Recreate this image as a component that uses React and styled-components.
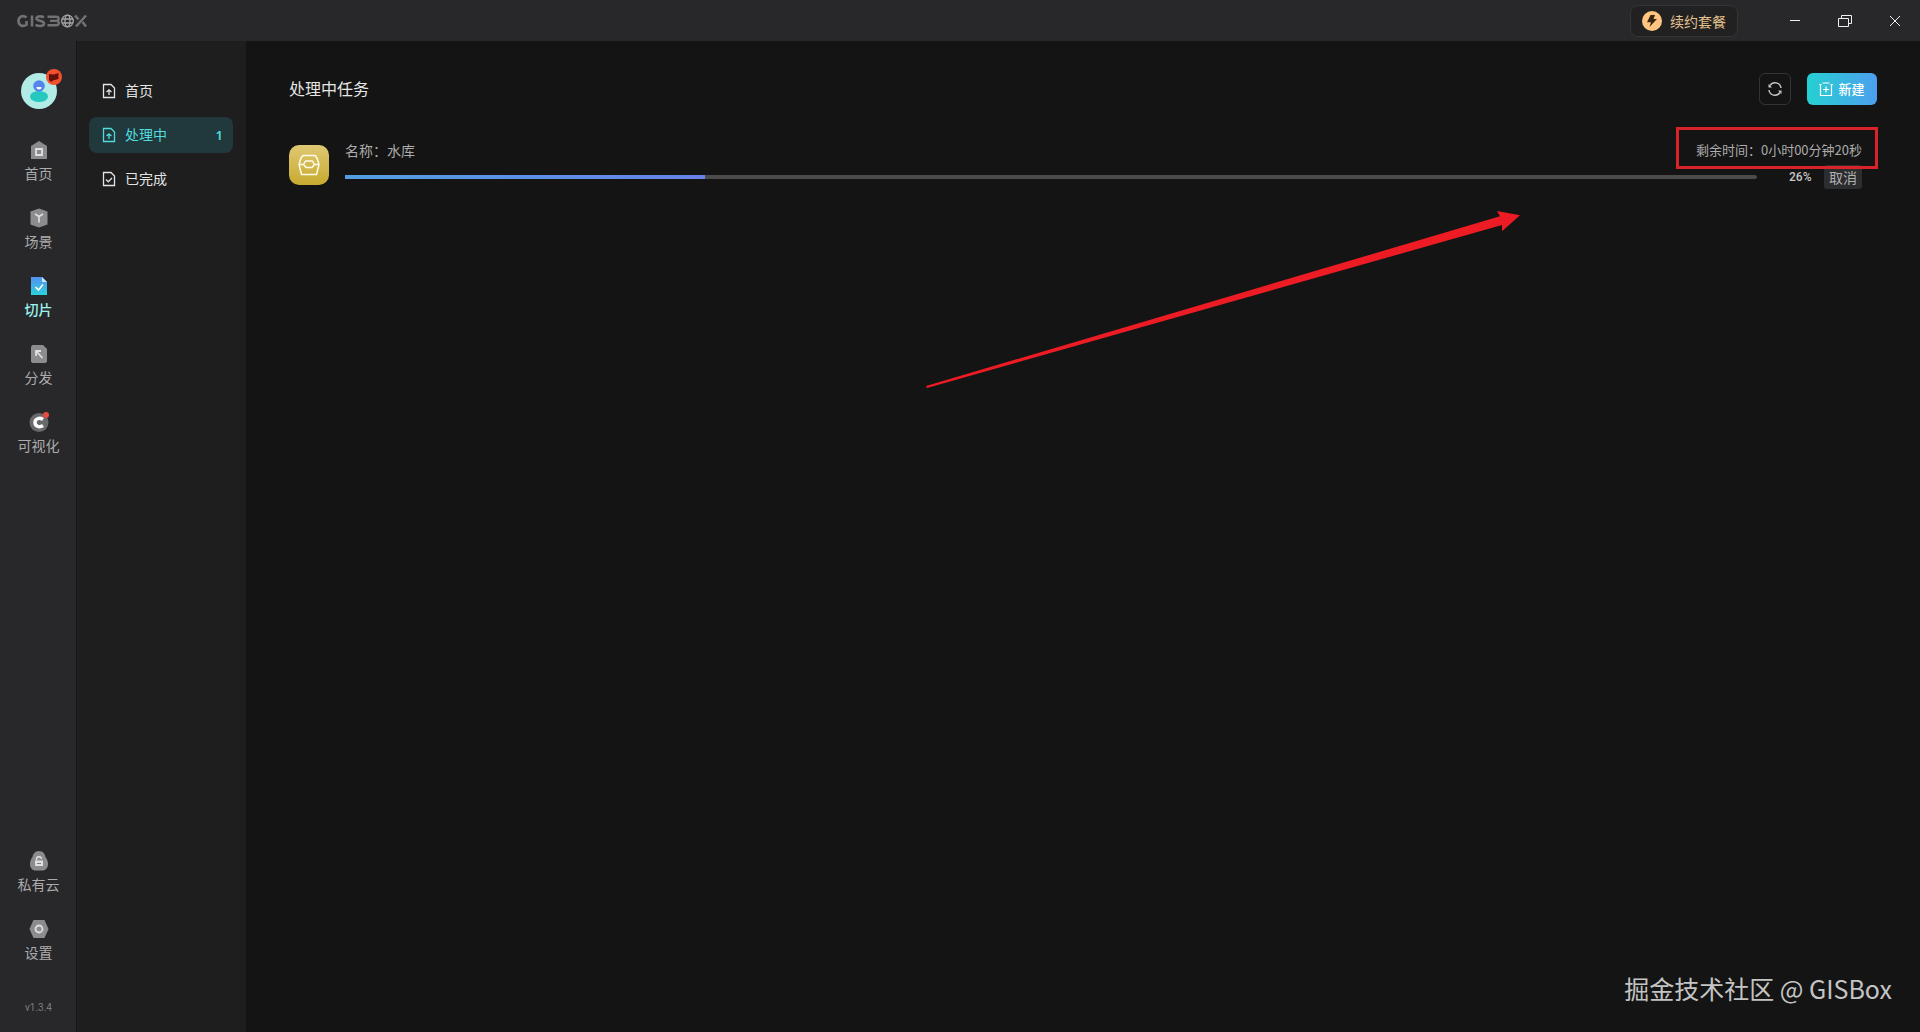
import React from "react";
import styled, { createGlobalStyle, css } from "styled-components";

const GlobalStyle = createGlobalStyle`
  * { box-sizing: border-box; }
  html, body, #root { height: 100%; }
  body {
    margin: 0;
    background: #141414;
    color: #e6e6e6;
    font-family: "Noto Sans CJK SC", "Noto Sans", sans-serif;
    font-size: 14px;
    line-height: 20px;
  }
  button { font: inherit; color: inherit; border: 0; background: none; padding: 0; cursor: pointer; }
  a { color: inherit; text-decoration: none; }
  svg { display: block; flex: none; }
`;

const Shell = styled.div`
  display: flex;
  flex-direction: column;
  min-height: 100vh;
  position: relative;
`;

const TitleBar = styled.header`
  display: flex;
  align-items: center;
  justify-content: space-between;
  height: 41px;
  padding-left: 17px;
  background: #28282a;
`;

const WindowTools = styled.div`
  display: flex;
  align-items: center;
`;

const RenewButton = styled.button`
  display: flex;
  align-items: center;
  gap: 8px;
  height: 32px;
  margin-right: 32px;
  padding: 0 11px;
  border: 1px solid #353537;
  border-radius: 8px;
  background: #212122;
  color: #e3c08c;
`;

const WindowButton = styled.button`
  display: grid;
  place-items: center;
  width: 50px;
  height: 40px;
  color: #f0f0f0;
`;

const Body = styled.div`
  display: flex;
  flex: 1;
`;

const Label = styled.span`
  padding-bottom: 2px;
`;

const Rail = styled.nav`
  display: flex;
  flex-direction: column;
  align-items: center;
  width: 77px;
  padding: 28px 0 14px;
  background: #28282b;
  box-shadow: inset -1px 0 #161617;
`;

const AvatarButton = styled.button`
  margin-bottom: 29px;
`;

const RailLink = styled.a`
  display: flex;
  flex-direction: column;
  align-items: center;
  gap: 3px;
  height: 48px;
  margin-bottom: 20px;
  color: ${(p) => (p.$active ? "#9df5f0" : "#acacad")};
  font-weight: ${(p) => (p.$active ? 500 : 400)};
`;

const RailSpacer = styled.div`
  flex: 1;
`;

const Version = styled.small`
  margin-top: 11px;
  color: #7c7c7e;
  font-family: Roboto, sans-serif;
  font-size: 10px;
  line-height: 20px;
`;

const Menu = styled.nav`
  display: flex;
  flex-direction: column;
  gap: 8px;
  width: 169px;
  padding: 32px 13px 0 12px;
  background: #1e1e1e;
`;

const MenuLink = styled.a`
  display: flex;
  align-items: center;
  gap: 9px;
  height: 36px;
  padding: 0 10px 0 13px;
  border-radius: 8px;
  color: #e4e4e4;
  ${(p) =>
    p.$active &&
    css`
      background: #21383c;
      color: #52dbdc;
    `}
`;

const Count = styled.span`
  margin-left: auto;
  font-family: "Noto Sans", sans-serif;
  font-size: 13px;
  font-weight: 600;
`;

const Main = styled.main`
  flex: 1;
  padding: 32px 43px 0;
`;

const PageHead = styled.div`
  display: flex;
  align-items: center;
  justify-content: space-between;
  height: 32px;
`;

const Title = styled.h1`
  margin: 0;
  padding-bottom: 2px;
  font-size: 16px;
  font-weight: 400;
  line-height: 24px;
`;

const Actions = styled.div`
  display: flex;
  gap: 16px;
`;

const RefreshButton = styled.button`
  display: grid;
  place-items: center;
  width: 32px;
  height: 32px;
  border: 1px solid #343434;
  border-radius: 6px;
  color: #c8c8c8;
`;

const CreateButton = styled.button`
  display: flex;
  align-items: center;
  justify-content: center;
  gap: 5px;
  width: 70px;
  height: 32px;
  border-radius: 6px;
  background: linear-gradient(90deg, #25d0d2, #4d9fee);
  color: #fff;
  font-size: 13px;
  font-weight: 500;
`;

const Task = styled.article`
  display: flex;
  align-items: center;
  gap: 16px;
  margin-top: 24px;
  height: 72px;
  padding-right: 15px;
`;

const TaskInfo = styled.div`
  display: flex;
  flex-direction: column;
  gap: 2px;
  flex: 1;
  padding-bottom: 2px;
`;

const TaskRow = styled.div`
  display: flex;
  align-items: center;
  justify-content: space-between;
  height: 24px;
  color: #acacac;
`;

const TaskHead = styled(TaskRow)`
  position: relative;
  z-index: 1;
`;

const Remaining = styled(Label)`
  font-size: 13px;
`;

const Highlight = styled.div`
  position: absolute;
  top: -12px;
  right: -16px;
  width: 202px;
  height: 42px;
  border: 3px solid #d8232a;
`;

const Progress = styled.div`
  flex: 1;
  height: 4px;
  margin-right: 32px;
  border-radius: 0 2px 2px 0;
  background: #4b4b4b;
`;

const ProgressFill = styled.div`
  height: 100%;
  background: linear-gradient(90deg, #529ee2, #6782e8);
`;

const Percent = styled.span`
  width: 35px;
  color: #c6c6c6;
  font-family: Roboto, sans-serif;
  font-size: 12px;
  font-weight: 500;
`;

const CancelButton = styled.button`
  width: 38px;
  height: 24px;
  border-radius: 3px;
  background: #2c2d2f;
  color: #b0b0b0;
`;

const Annotation = styled.svg`
  position: absolute;
  top: 210px;
  right: 399px;
  pointer-events: none;
`;

const Watermark = styled.div`
  position: absolute;
  right: 28px;
  bottom: 26px;
  color: #c4c4c4;
  font-size: 25px;
  line-height: 36px;
`;

function Logo() {
  return (
    <svg width="71" height="14" viewBox="0 0 71 14" role="img" aria-label="GISBOX" fill="none" stroke="#717174" strokeWidth="2.600">
      <path d="M9.500 3.500C6 .8 1.500 2.500 1.500 7S6 13.200 9.500 10.800V7M15 1.500V12.500M27 3.200C24 2 19.500 2 19.500 4.500C19.500 7.500 27 6 27 9.500C27 12.500 22 12.500 18.500 10.800" />
      <path d="M30.500 2.700H39C42.500 2.700 42.500 6.900 39 6.900H33M39 6.900C43 6.900 43 11.300 39 11.300H30.500" strokeWidth="2.400" />
      <g stroke="#a4a4a6" strokeWidth="1.300">
        <circle cx="50.500" cy="7" r="5.800" />
        <ellipse cx="50.500" cy="7" rx="2.500" ry="5.800" />
        <path d="M45 5H56M45 9H56" />
      </g>
      <path d="M58 1.500L61.500 5.500M69 1.500L59 12.500M65.500 8L69 12.500" />
    </svg>
  );
}

function BoltIcon() {
  return (
    <svg width="20" height="20" viewBox="0 0 20 20">
      <circle cx="10" cy="10" r="10" fill="#ffc581" />
      <path d="M8.500 4H13L11.500 8H15L7.500 16L9 11.200H5Z" fill="#38250f" />
    </svg>
  );
}

function Avatar() {
  return (
    <svg width="46" height="42" viewBox="-4 0 46 42">
      <circle cx="19" cy="22" r="18" fill="#b2ece7" />
      <ellipse cx="19" cy="27.500" rx="9" ry="5.500" fill="#26c9bf" />
      <circle cx="19" cy="17" r="5.800" fill="#5484ec" />
      <path d="M16.500 18H21.500A2.500 2.500 0 0 1 16.500 18" fill="#fff" />
      <circle cx="34" cy="8" r="8" fill="#f4502f" />
      <path d="M29 5L34 5.500L38.500 4V10L33 11.500L31 13L29 11Z" fill="#641209" />
    </svg>
  );
}

const railShapes = {
  home: (
    <>
      <path d="M10 1L18 6V19H2V6Z" fill="#8c8c8e" />
      <path d="M7 9H13V15H7Z" fill="none" stroke="#e0e0e0" strokeWidth="1.800" />
    </>
  ),
  scene: (
    <>
      <path d="M10 .5L18.500 3.500V16.500L10 19.500L1.500 16.500V3.500Z" fill="#8c8c8e" />
      <path d="M6 6L10 8.500L14 6M10 8.500V14.500" fill="none" stroke="#e0e0e0" strokeWidth="1.600" />
    </>
  ),
  slice: (
    <>
      <defs>
        <linearGradient id="slice" x2="0" y2="1">
          <stop stopColor="#5591f0" />
          <stop offset="1" stopColor="#2bd2da" />
        </linearGradient>
      </defs>
      <path d="M2 1H13L18 6V19H2Z" fill="url(#slice)" />
      <path d="M13 1L18 6H13Z" fill="#c4eaff" />
      <path d="M6.500 11L9.500 14L14 8.500" fill="none" stroke="#fff" strokeWidth="1.600" />
    </>
  ),
  share: (
    <>
      <path d="M3.500 1H14L18 5V17.500L16.500 19H3.500L2 17.500V2.500Z" fill="#8c8c8e" />
      <path d="M7 12V7H12M7 7L13.500 14" fill="none" stroke="#e0e0e0" strokeWidth="1.800" />
    </>
  ),
  visual: (
    <>
      <circle cx="10" cy="10.500" r="9.500" fill="#69696b" />
      <path d="M14 7.500C10 5 6 7 6 10.500S10 16 14 13.500" fill="none" stroke="#fff" strokeWidth="3.500" />
      <circle cx="17" cy="3" r="3" fill="#e84b40" />
    </>
  ),
  cloud: (
    <>
      <path d="M10 0C14 0 16 3 16.500 6C18 8 19 10 19 13C19 17 16.500 19.500 13.500 19.500H6.500C3.500 19.500 1 17 1 13C1 10 2 8 3.500 6C4 3 6 0 10 0Z" fill="#8c8c8e" />
      <path d="M6 9.500H14V15H6Z" fill="#e0e0e0" />
      <path d="M7.500 9.500V8.500A2.500 2.500 0 0 1 12.500 8" fill="none" stroke="#e0e0e0" strokeWidth="1.400" />
      <path d="M8 12.500H12" stroke="#7d7d7f" />
    </>
  ),
  settings: (
    <>
      <path d="M4.500 1H15.500L19.500 10L15.500 19H4.500L.5 10Z" fill="#8c8c8e" />
      <circle cx="10" cy="10" r="3.500" fill="none" stroke="#e0e0e0" strokeWidth="1.800" />
    </>
  ),
};

function RailItem({ icon, label, active }) {
  return (
    <RailLink href="#" $active={active}>
      <svg width="20" height="20" viewBox="0 0 20 20">{railShapes[icon]}</svg>
      <Label>{label}</Label>
    </RailLink>
  );
}

function FileIcon({ done }) {
  return (
    <svg width="14" height="16" viewBox="0 0 14 16" fill="none" stroke="currentColor" strokeWidth="1.300">
      <path d="M1.500 1.500H9L12.500 5V14.500H1.500Z" />
      <path d={done ? "M4 8.500L6.300 10.800L10 7" : "M7 12V7M4.500 9L7 6.800L9.500 9"} />
    </svg>
  );
}

function App() {
  return (
    <Shell>
      <GlobalStyle />
      <TitleBar>
        <Logo />
        <WindowTools>
          <RenewButton><BoltIcon />续约套餐</RenewButton>
          <WindowButton aria-label="最小化">
            <svg width="14" height="14" viewBox="0 0 14 14" stroke="currentColor"><path d="M2 6.500H12" /></svg>
          </WindowButton>
          <WindowButton aria-label="还原">
            <svg width="14" height="14" viewBox="0 0 14 14" fill="none" stroke="currentColor"><path d="M.5 4.500H10.500V12.500H.5ZM3.500 4.500V1.500H13.500V9.500H10.500" /></svg>
          </WindowButton>
          <WindowButton aria-label="关闭">
            <svg width="12" height="12" viewBox="0 0 12 12" stroke="currentColor"><path d="M1 1L11 11M11 1L1 11" /></svg>
          </WindowButton>
        </WindowTools>
      </TitleBar>
      <Body>
        <Rail>
          <AvatarButton aria-label="账户"><Avatar /></AvatarButton>
          <RailItem icon="home" label="首页" />
          <RailItem icon="scene" label="场景" />
          <RailItem icon="slice" label="切片" active />
          <RailItem icon="share" label="分发" />
          <RailItem icon="visual" label="可视化" />
          <RailSpacer />
          <RailItem icon="cloud" label="私有云" />
          <RailItem icon="settings" label="设置" />
          <Version>v1.3.4</Version>
        </Rail>
        <Menu>
          <MenuLink href="#"><FileIcon /><Label>首页</Label></MenuLink>
          <MenuLink href="#" $active><FileIcon /><Label>处理中</Label><Count>1</Count></MenuLink>
          <MenuLink href="#"><FileIcon done /><Label>已完成</Label></MenuLink>
        </Menu>
        <Main>
          <PageHead>
            <Title>处理中任务</Title>
            <Actions>
              <RefreshButton aria-label="刷新">
                <svg width="16" height="16" viewBox="0 0 16 16" fill="none" stroke="currentColor" strokeWidth="1.400">
                  <path d="M14 7A6 6 0 0 0 3 4.500M2 9A6 6 0 0 0 13 11.500" />
                  <path d="M1.500 3V6.500H5ZM14.500 13V9.500H11Z" fill="currentColor" stroke="none" />
                </svg>
              </RefreshButton>
              <CreateButton>
                <svg width="14" height="16" viewBox="0 0 14 16" fill="none" stroke="currentColor" strokeWidth="1.200">
                  <path d="M1.500 3.500V14.500H12.500V3.500M0 3.500H2.500M11.500 3.500H14M3.500 2H10.500M7 5.500V11.500M4 8.500H10" />
                </svg>
                新建
              </CreateButton>
            </Actions>
          </PageHead>
          <Task>
            <svg width="40" height="40" viewBox="0 0 40 40">
              <defs>
                <linearGradient id="gold" x2="0" y2="1">
                  <stop stopColor="#dfc873" />
                  <stop offset="1" stopColor="#c8aa2f" />
                </linearGradient>
              </defs>
              <rect width="40" height="40" rx="10" fill="url(#gold)" />
              <g fill="none" stroke="#fffbe8" strokeWidth="1.500" strokeLinejoin="round">
                <path d="M14 10.500H26L28 13L30 19.500L27.500 29.500H12.500L10 19.500L12 13Z" />
                <path d="M10 19.500H14.500L16.500 16H23.500L25.500 19.500H30M14.500 19.500L17 22.500H23L25.500 19.500" />
              </g>
            </svg>
            <TaskInfo>
              <TaskHead>
                <Label>名称：水库</Label>
                <Remaining>剩余时间：0小时00分钟20秒</Remaining>
                <Highlight />
              </TaskHead>
              <TaskRow>
                <Progress role="progressbar" aria-label="水库" aria-valuenow={26} aria-valuemin={0} aria-valuemax={100}>
                  <ProgressFill style={{ width: "25.5%" }} />
                </Progress>
                <Percent>26%</Percent>
                <CancelButton>取消</CancelButton>
              </TaskRow>
            </TaskInfo>
          </Task>
        </Main>
      </Body>
      <Annotation width="596" height="180" viewBox="925 210 596 180" aria-hidden="true">
        <path d="M926 386L1500 216.300L1497 211L1520 215.300L1502 231.300L1502 225L927 388Z" fill="#ed1c24" />
      </Annotation>
      <Watermark>掘金技术社区 @ GISBox</Watermark>
    </Shell>
  );
}

export default App;
